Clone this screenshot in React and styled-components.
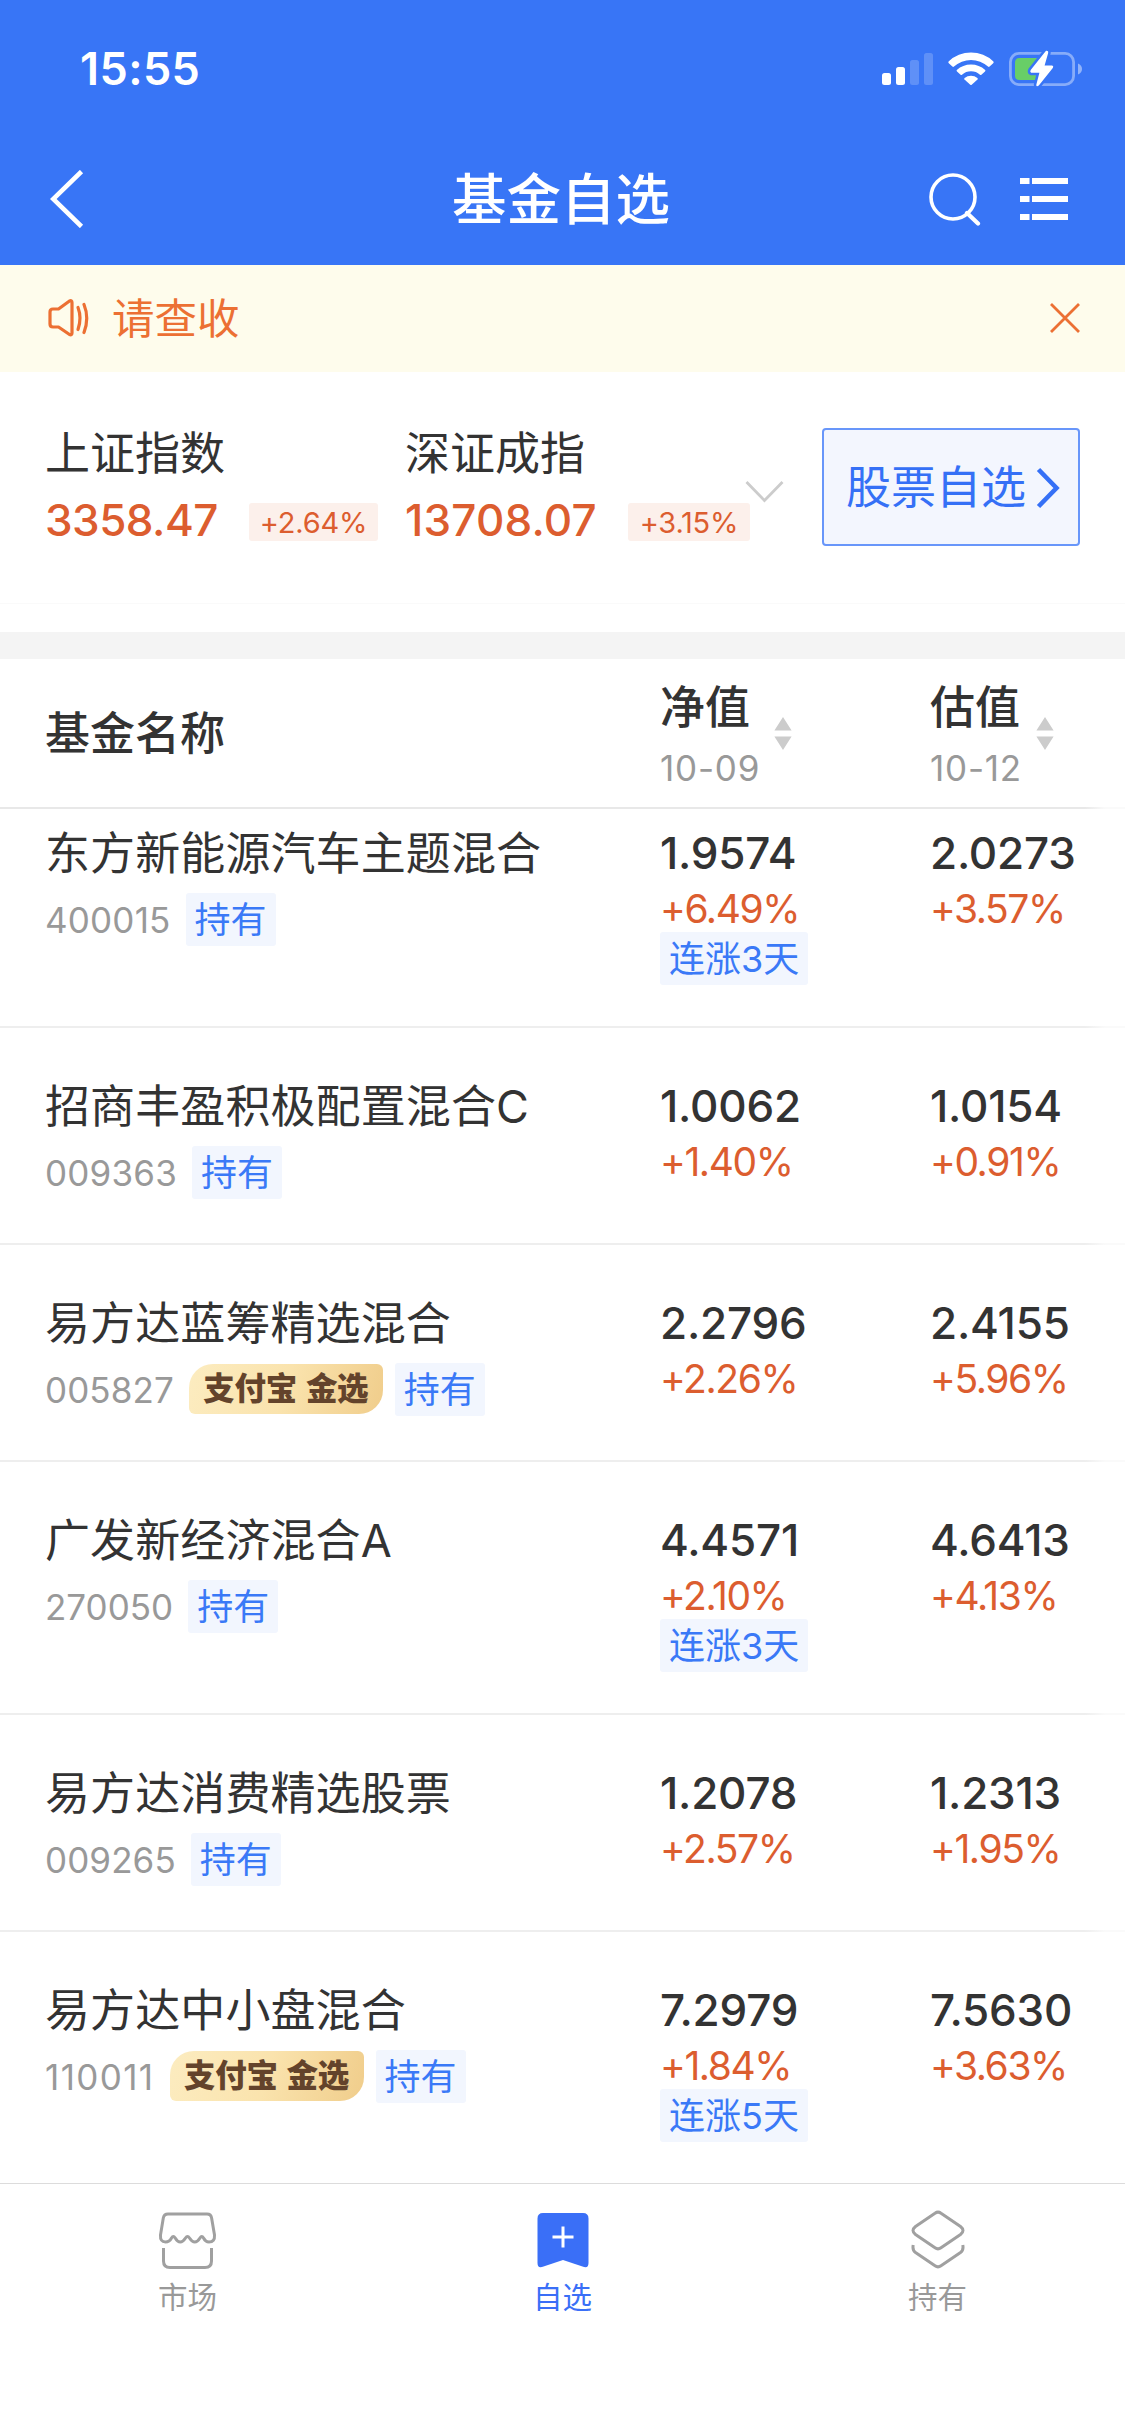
import React from "react";
import styled, { createGlobalStyle } from "styled-components";

const BLUE = "#3875f6";
const RED = "#dc5d2f";

const GlobalStyle = createGlobalStyle`
  * { box-sizing: border-box; }
  body {
    margin: 0;
    background: #fff;
    color: #333;
    font-family: Inter, "Noto Sans CJK SC", sans-serif;
  }
`;

const Screen = styled.div`
  width: 1125px;
  height: 2436px;
  display: flex;
  flex-direction: column;
  overflow: hidden;
  background: #fff;
  white-space: nowrap;
`;

const Header = styled.header`
  height: 265px;
  flex: none;
  background: ${BLUE};
  color: #fff;
`;

const StatusBar = styled.div`
  height: 138px;
  padding: 0 43px 0 80px;
  display: flex;
  align-items: center;
  justify-content: space-between;
`;

const Time = styled.span`
  font-size: 45px;
  font-weight: 600;
  line-height: 60px;
  letter-spacing: 0.4px;
`;

const NavBar = styled.div`
  height: 121px;
  padding: 0 57px 0 50px;
  display: grid;
  grid-template-columns: 1fr auto 1fr;
  align-items: center;
`;

const Title = styled.h1`
  margin: 1px 0 0 4px;
  font-size: 54.5px;
  font-weight: 500;
  line-height: 80px;
`;

const NavActions = styled.div`
  display: flex;
  justify-content: flex-end;
  align-items: center;
  gap: 39px;
`;

const Notice = styled.div`
  height: 107px;
  flex: none;
  padding: 0 44px 1px 47px;
  display: flex;
  align-items: center;
  background: #fefcec;
  color: #ec7033;
`;

const NoticeText = styled.span`
  flex: 1;
  margin: 2px 0 0 22px;
  font-size: 42.5px;
  line-height: 60px;
`;

const IndexPanel = styled.section`
  height: 260px;
  flex: none;
  padding: 52px 45px 0;
  display: flex;
  background: linear-gradient(#fafafa, #fafafa) 0 231px / 100% 1px no-repeat;
`;

const IndexItem = styled.div`
  width: ${(p) => p.$width}px;
`;

const IndexName = styled.div`
  font-size: 45px;
  line-height: 60px;
`;

const IndexValueRow = styled.div`
  display: flex;
  align-items: center;
  justify-content: space-between;
  height: 72px;
  padding-right: ${(p) => p.$inset}px;
`;

const IndexValue = styled.span`
  font-size: 44px;
  font-weight: 500;
  letter-spacing: ${(p) => p.$spacing}px;
  color: ${RED};
`;

const ChangeBadge = styled.span`
  width: ${(p) => p.$width}px;
  height: 38px;
  margin-top: 4px;
  display: flex;
  align-items: center;
  justify-content: center;
  border-radius: 3px;
  background: #fcf0eb;
  color: ${RED};
  font-size: 29px;
  letter-spacing: -0.2px;
`;

const Expand = styled.div`
  width: 54px;
  padding-top: 56px;
  margin-left: -5px;
`;

const StockButton = styled.button`
  width: 258px;
  height: 118px;
  margin: 4px 0 0 auto;
  padding: 2px 18px 0 22px;
  display: flex;
  align-items: center;
  justify-content: space-between;
  border: 2px solid #6896fa;
  border-radius: 4px;
  background: #f3f6fe;
  color: #3570f6;
  font-family: inherit;
  font-size: 45px;
  line-height: 60px;
`;

const Divider = styled.div`
  height: 27px;
  flex: none;
  background: #f4f4f4;
`;

const fadeLine = (color) => `linear-gradient(90deg, ${color} 0, ${color} 1085px, #fafafa 1105px) bottom / 100% 2px no-repeat`;

const columns = "615px 270px 1fr";

const TableHead = styled.div`
  height: 150px;
  flex: none;
  padding-left: 45px;
  display: grid;
  grid-template-columns: ${columns};
  background: ${fadeLine("#e8e8e8")};
`;

const HeadName = styled.div`
  padding-top: 45px;
  font-size: 45px;
  font-weight: 500;
  line-height: 60px;
`;

const HeadCell = styled.div`
  display: flex;
  padding-top: 19px;
`;

const HeadLabel = styled.div`
  width: ${(p) => p.$width}px;
`;

const HeadTitle = styled.div`
  font-size: 45px;
  font-weight: 500;
  line-height: 60px;
`;

const HeadDate = styled.div`
  color: #999;
  font-size: 35px;
  line-height: 60px;
  letter-spacing: 0.8px;
`;

const SortIcon = styled.svg`
  margin-top: 39px;
`;

const List = styled.main`
  flex: 1;
  min-height: 0;
  overflow: hidden;
`;

const Row = styled.div`
  min-height: 217px;
  margin-top: ${(p) => (p.$first ? -34 : 0)}px;
  padding: 48px 0 43px 45px;
  display: grid;
  grid-template-columns: ${columns};
  background: ${fadeLine("#eeeeee")};
`;

const FundName = styled.div`
  padding-top: 1px;
  font-size: 45px;
  line-height: 60px;
  letter-spacing: 0.1px;
`;

const Meta = styled.div`
  height: 53px;
  margin-top: 9px;
  display: flex;
  align-items: center;
`;

const Code = styled.span`
  color: #999;
  font-size: 35px;
  margin-right: 15px;
  letter-spacing: ${(p) => p.$tracking}px;
`;

const Tag = styled.span`
  width: max-content;
  height: 53px;
  padding: 2px 9px 0;
  display: flex;
  align-items: center;
  border-radius: 3px;
  background: #f2f6fe;
  color: #3a79f7;
  font-size: 36px;
  line-height: 51px;
`;

const GoldTag = styled.span`
  width: 194px;
  height: 50px;
  margin: -1px 12px 0 0;
  padding-bottom: 1px;
  display: flex;
  align-items: center;
  justify-content: center;
  border-radius: 24px 6px 24px 6px;
  background: linear-gradient(105deg, #fcecc0 0%, #fae3ad 50%, #f0cd8b 100%);
  color: #63432b;
  font-size: 31.5px;
  font-weight: 900;
  letter-spacing: -0.3px;
  word-spacing: 3px;
  line-height: 48px;
`;

const Value = styled.div`
  font-size: 44px;
  font-weight: 500;
  line-height: 60px;
  letter-spacing: -0.2px;
`;

const Percent = styled.div`
  margin-top: 3px;
  color: ${RED};
  font-size: 39px;
  line-height: 46px;
  letter-spacing: -1.4px;
`;

const TabBar = styled.nav`
  height: 253px;
  flex: none;
  display: flex;
  border-top: 1px solid #dcdcdc;
  background: #fff;
`;

const Tab = styled.div`
  flex: 1;
  padding-top: 25px;
  display: flex;
  flex-direction: column;
  align-items: center;
  color: ${(p) => (p.$active ? "#3a6ff7" : "#999")};
  font-size: 29.5px;
  line-height: 40px;
`;

const TabLabel = styled.span`
  margin-top: 8px;
`;

const StatusIcons = () => (
  <svg width="202" height="40" viewBox="880 49 202 40" fill="#fff">
    <rect x="882" y="73" width="9" height="12" rx="2.5" />
    <rect x="896" y="67" width="9" height="18" rx="2.5" />
    <rect x="910" y="60" width="9" height="25" rx="2.5" opacity=".2" />
    <rect x="924" y="53" width="9" height="32" rx="2.5" opacity=".2" />
    <path d="M948.6 61.5 Q948 62.4 948.8 63.2 L952.4 66.6 Q953.2 67.3 954 66.6 A25 25 0 0 1 988 66.6 Q988.8 67.3 989.6 66.6 L993.2 63.2 Q994 62.4 993.4 61.5 A32.5 32.5 0 0 0 948.6 61.5Z" />
    <path d="M956.8 70 Q956.2 70.8 957 71.5 L960.6 74.8 Q961.3 75.3 962 74.8 A13.5 13.5 0 0 1 980 74.8 Q980.7 75.3 981.4 74.8 L985 71.5 Q985.8 70.8 985.2 70 A21 21 0 0 0 956.8 70Z" />
    <path d="M964.6 78 A10 10 0 0 1 977.4 78 Q978.2 78.8 977.5 79.5 L971.7 84.7 Q971 85.3 970.3 84.7 L964.5 79.5 Q963.8 78.8 964.6 78Z" />
    <rect x="1010.4" y="53.4" width="63.2" height="31.2" rx="8.5" fill="none" stroke="#fff" strokeOpacity=".4" strokeWidth="2.8" />
    <path d="M1078 63.5 Q1082 65.2 1082 69 Q1082 72.8 1078 74.5Z" opacity=".45" />
    <path d="M1019.5 58 H1037 V80 H1019.5 Q1015 80 1015 75.5 V62.5 Q1015 58 1019.5 58Z" fill="#68ce67" />
    <path d="M1046 50.8 Q1048.7 50.5 1048.1 53.2 L1044.6 65.4 H1052.2 Q1054 66 1052.8 68 L1038.8 85.5 Q1036.2 87.5 1036.3 84.7 L1039.4 72.7 H1031.2 Q1029.6 72 1030.7 70Z" stroke={BLUE} strokeWidth="5" paintOrder="stroke" />
  </svg>
);

const BackIcon = () => (
  <svg width="34" height="58" viewBox="0 0 34 58" fill="none" stroke="#fff" strokeWidth="4.6">
    <path d="M31.5 1.5 L3.2 29 L31.5 56.5" />
  </svg>
);

const SearchIcon = () => (
  <svg width="52" height="54" viewBox="0 0 52 54" fill="none" stroke="#fff" strokeWidth="3.6">
    <circle cx="24" cy="25" r="22" />
    <path d="M38 41 L49 51.5" strokeWidth="4.2" strokeLinecap="round" />
  </svg>
);

const ListIcon = () => (
  <svg width="48" height="42" viewBox="0 0 48 42" fill="#fff">
    {[0, 18, 36].map((y) => (
      <React.Fragment key={y}>
        <rect x="0" y={y} width="9.5" height="6" />
        <rect x="12" y={y} width="36" height="6" />
      </React.Fragment>
    ))}
  </svg>
);

const SpeakerIcon = () => (
  <svg width="43" height="40" viewBox="0 0 43 40" fill="none" stroke="currentColor" strokeWidth="3.2" strokeLinejoin="round" strokeLinecap="round">
    <path d="M6 11 H11.5 L22.5 3 Q25 2 25 4.5 V35 Q25 37.5 22.5 36.5 L11.5 29 H6 Q3 29 3 26 V14 Q3 11 6 11Z" />
    <path d="M31 9.5 Q35 20 31 31.5" />
    <path d="M37 6.5 Q42.5 20 37 34.5" />
  </svg>
);

const CloseIcon = () => (
  <svg width="32" height="32" viewBox="0 0 32 32" fill="none" stroke="currentColor" strokeWidth="2.8">
    <path d="M2 2 L30 30 M30 2 L2 30" />
  </svg>
);

const DownIcon = () => (
  <svg width="39" height="24" viewBox="0 0 39 24" fill="none" stroke="#ccc" strokeWidth="2.8">
    <path d="M1.5 2 L19.5 20.5 L37.5 2" />
  </svg>
);

const RightIcon = () => (
  <svg width="24" height="42" viewBox="0 0 24 42" fill="none" stroke="currentColor" strokeWidth="4.6">
    <path d="M2.5 2.5 L20.5 21 L2.5 39.5" />
  </svg>
);

const Sort = () => (
  <SortIcon width="18" height="34" viewBox="0 0 18 34" fill="#ccc">
    <path d="M9 0 L17.6 13.6 H.4Z M9 33 L17.6 19.4 H.4Z" />
  </SortIcon>
);

const MarketIcon = () => (
  <svg width="60" height="60" viewBox="0 0 60 60" fill="none" stroke="#a0a0a0" strokeWidth="3" strokeLinejoin="round">
    <path d="M10 5 H49 Q53 5 53.6 9 L56.5 26 Q57 33 51 33 Q47.5 33 45.5 29 Q43.8 26 42 29 Q39.5 33 36.8 33 Q34 33 31.5 29 Q29.5 26 27.5 29 Q25 33 22.2 33 Q19.5 33 17.2 29 Q15.3 26 13.5 29 Q11.5 33 7.5 33 Q2 33 2.5 26 L5.3 9 Q6 5 10 5Z" />
    <path d="M5.5 39 V52 Q5.5 58.5 12 58.5 H47 Q53.5 58.5 53.5 52 V39" />
  </svg>
);

const WatchIcon = () => (
  <svg width="60" height="60" viewBox="0 0 60 60">
    <path d="M10 4 H50 Q55.5 4 55.5 9.5 V54 Q55.5 60 49.5 57.6 L30 51 L10.5 57.6 Q4.5 60 4.5 54 V9.5 Q4.5 4 10 4Z" fill="#3a6ff7" />
    <path d="M30 17.5 V38.5 M19.5 28 H40.5" stroke="#fff" strokeWidth="3" />
  </svg>
);

const HoldingIcon = () => (
  <svg width="60" height="60" viewBox="0 0 60 60" fill="none" stroke="#a0a0a0" strokeWidth="3" strokeLinejoin="round">
    <path d="M27 4.2 Q30 2 33 4.2 L52.5 17.5 Q57.5 21.5 52.5 25.5 L33 38.8 Q30 41 27 38.8 L7.5 25.5 Q2.5 21.5 7.5 17.5Z" />
    <path d="M5.2 36 Q4.2 41 7.5 43.5 L27 56.8 Q30 59 33 56.8 L52.5 43.5 Q55.8 41 54.8 36" />
  </svg>
);

const funds = [
  { name: "东方新能源汽车主题混合", code: "400015", tracking: 0.2, nav: "1.9574", navPct: "+6.49%", streak: "连涨3天", est: "2.0273", estPct: "+3.57%" },
  { name: "招商丰盈积极配置混合C", code: "009363", tracking: 0.2, nav: "1.0062", navPct: "+1.40%", est: "1.0154", estPct: "+0.91%" },
  { name: "易方达蓝筹精选混合", code: "005827", tracking: 0.1, gold: true, nav: "2.2796", navPct: "+2.26%", est: "2.4155", estPct: "+5.96%" },
  { name: "广发新经济混合A", code: "270050", tracking: 0, nav: "4.4571", navPct: "+2.10%", streak: "连涨3天", est: "4.6413", estPct: "+4.13%" },
  { name: "易方达消费精选股票", code: "009265", tracking: 0.1, nav: "1.2078", navPct: "+2.57%", est: "1.2313", estPct: "+1.95%" },
  { name: "易方达中小盘混合", code: "110011", tracking: 1.4, gold: true, nav: "7.2979", navPct: "+1.84%", streak: "连涨5天", est: "7.5630", estPct: "+3.63%" },
];

export default function App() {
  return (
    <Screen>
      <GlobalStyle />
      <Header>
        <StatusBar>
          <Time>15:55</Time>
          <StatusIcons />
        </StatusBar>
        <NavBar>
          <BackIcon />
          <Title>基金自选</Title>
          <NavActions>
            <SearchIcon />
            <ListIcon />
          </NavActions>
        </NavBar>
      </Header>

      <Notice>
        <SpeakerIcon />
        <NoticeText>请查收</NoticeText>
        <CloseIcon />
      </Notice>

      <IndexPanel>
        <IndexItem $width={360}>
          <IndexName>上证指数</IndexName>
          <IndexValueRow $inset={27}>
            <IndexValue $spacing={-0.5}>3358.47</IndexValue>
            <ChangeBadge $width={129}>+2.64%</ChangeBadge>
          </IndexValueRow>
        </IndexItem>
        <IndexItem $width={345}>
          <IndexName>深证成指</IndexName>
          <IndexValueRow $inset={0}>
            <IndexValue $spacing={0.2}>13708.07</IndexValue>
            <ChangeBadge $width={122}>+3.15%</ChangeBadge>
          </IndexValueRow>
        </IndexItem>
        <Expand>
          <DownIcon />
        </Expand>
        <StockButton>
          股票自选
          <RightIcon />
        </StockButton>
      </IndexPanel>
      <Divider />

      <TableHead>
        <HeadName>基金名称</HeadName>
        <HeadCell>
          <HeadLabel $width={114}>
            <HeadTitle>净值</HeadTitle>
            <HeadDate>10-09</HeadDate>
          </HeadLabel>
          <Sort />
        </HeadCell>
        <HeadCell>
          <HeadLabel $width={106}>
            <HeadTitle>估值</HeadTitle>
            <HeadDate>10-12</HeadDate>
          </HeadLabel>
          <Sort />
        </HeadCell>
      </TableHead>

      <List>
        {funds.map((f, i) => (
          <Row key={f.code} $first={i === 0}>
            <div>
              <FundName>{f.name}</FundName>
              <Meta>
                <Code $tracking={f.tracking}>{f.code}</Code>
                {f.gold && <GoldTag>支付宝 金选</GoldTag>}
                <Tag>持有</Tag>
              </Meta>
            </div>
            <div>
              <Value>{f.nav}</Value>
              <Percent>{f.navPct}</Percent>
              {f.streak && <Tag>{f.streak}</Tag>}
            </div>
            <div>
              <Value>{f.est}</Value>
              <Percent>{f.estPct}</Percent>
            </div>
          </Row>
        ))}
      </List>

      <TabBar>
        <Tab>
          <MarketIcon />
          <TabLabel>市场</TabLabel>
        </Tab>
        <Tab $active>
          <WatchIcon />
          <TabLabel>自选</TabLabel>
        </Tab>
        <Tab>
          <HoldingIcon />
          <TabLabel>持有</TabLabel>
        </Tab>
      </TabBar>
    </Screen>
  );
}
